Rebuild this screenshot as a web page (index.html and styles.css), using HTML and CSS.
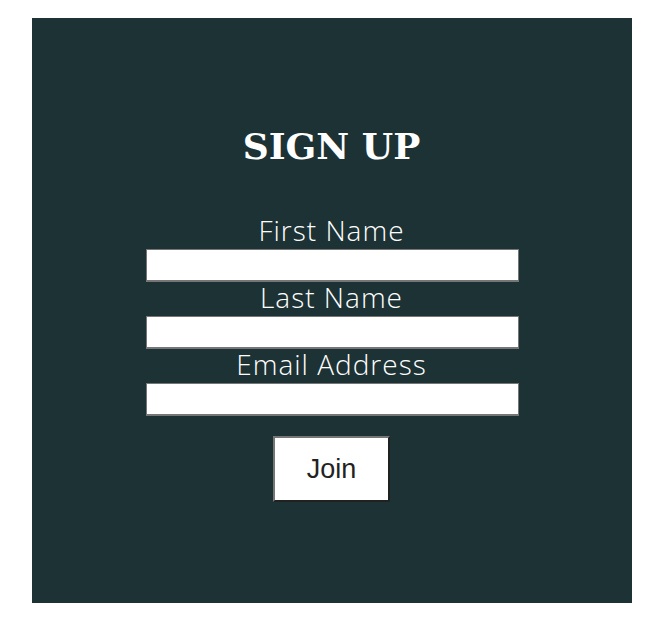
FILE: index.html
```html
<!DOCTYPE html>
<html lang="en">
<head>
<meta charset="utf-8">
<title>Sign Up</title>
<link rel="stylesheet" href="styles.css">
</head>
<body>
<main class="panel">
  <h1 class="title">SIGN UP</h1>
  <form class="form">
    <label class="label" for="first">First Name</label>
    <input class="field" id="first" type="text">
    <label class="label" for="last">Last Name</label>
    <input class="field" id="last" type="text">
    <label class="label" for="email">Email Address</label>
    <input class="field" id="email" type="email">
    <button class="join" type="button">Join</button>
  </form>
</main>
</body>
</html>
```

FILE: styles.css
```css
html, body {
  margin: 0;
  padding: 0;
  background: #ffffff;
}

.panel {
  box-sizing: border-box;
  width: 600px;
  height: 585px;
  margin: 18px auto 0;
  padding-top: 106px;
  background: #1d3234;
  color: #ffffff;
  display: flex;
  flex-direction: column;
  align-items: center;
}

.title {
  margin: 0;
  font-family: "DejaVu Serif", "Liberation Serif", serif;
  font-weight: bold;
  font-size: 36px;
  line-height: 44px;
  letter-spacing: 0;
}

.form {
  margin-top: 47px;
  display: flex;
  flex-direction: column;
  align-items: center;
}

.label {
  font-family: "Open Sans", "Lato", sans-serif;
  font-weight: 300;
  font-size: 28px;
  line-height: 30px;
  letter-spacing: 1px;
  margin-bottom: 4px;
}

.field {
  box-sizing: border-box;
  width: 373px;
  height: 33px;
  margin: 0 0 0 1px;
  padding: 1px 4px;
  background: #ffffff;
  border: 1px solid #767676;
  border-bottom-width: 2px;
  border-radius: 0;
  font-size: 16px;
}

.join {
  box-sizing: border-box;
  margin-top: 20px;
  width: 117px;
  height: 66px;
  background: #ffffff;
  color: #222222;
  border: 2px outset #767676;
  font-family: "Liberation Sans", Arial, sans-serif;
  font-size: 27px;
  padding: 0;
}
```
